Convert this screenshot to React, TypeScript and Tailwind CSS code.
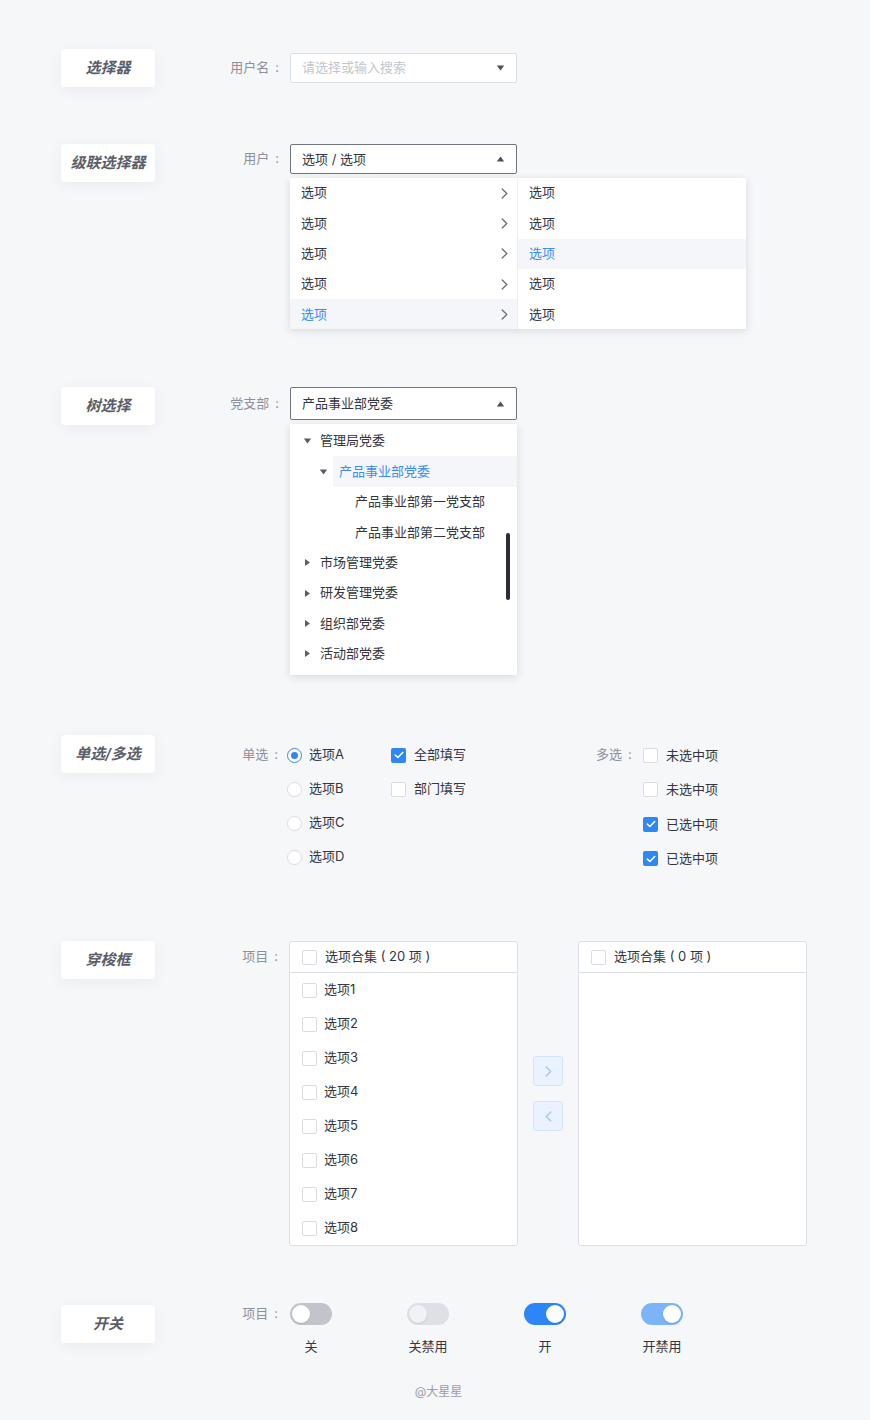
import React from "react";

const TriDown = ({ className = "" }: { className?: string }) => (
  <svg width="9" height="6" viewBox="0 0 9 6" className={className}>
    <path d="M0.8 0.6 L8.2 0.6 L4.5 5.4 Z" fill="currentColor" />
  </svg>
);

const TriUp = ({ className = "" }: { className?: string }) => (
  <svg width="9" height="6" viewBox="0 0 9 6" className={className}>
    <path d="M0.8 5.4 L8.2 5.4 L4.5 0.6 Z" fill="currentColor" />
  </svg>
);

const TriRight = ({ className = "" }: { className?: string }) => (
  <svg width="9" height="9" viewBox="0 0 9 9" className={className}>
    <path d="M2 1 L7 4.5 L2 8 Z" fill="currentColor" />
  </svg>
);

const Chevron = ({ dir = "right", className = "" }: { dir?: "right" | "left"; className?: string }) => (
  <svg width="7" height="11" viewBox="0 0 7 11" className={className}>
    <path
      d={dir === "right" ? "M1.2 1 L5.8 5.5 L1.2 10" : "M5.8 1 L1.2 5.5 L5.8 10"}
      fill="none"
      stroke="currentColor"
      strokeWidth="1.3"
      strokeLinecap="round"
      strokeLinejoin="round"
    />
  </svg>
);

function TitleCard({ children, className = "" }: { children: React.ReactNode; className?: string }) {
  return (
    <div
      className={`ml-[61px] w-[94px] h-[38px] shrink-0 bg-white rounded-[4px] shadow-[0_3px_14px_rgba(40,50,90,0.06)] flex items-center justify-center text-[15px] font-semibold italic text-[#5b5e69] ${className}`}
    >
      {children}
    </div>
  );
}

function FieldLabel({ text, className = "" }: { text: string; className?: string }) {
  return (
    <div className={`shrink-0 flex items-center justify-end text-[13px] text-[#8d909a] ${className}`}>
      <span>{text}</span>
      <span className="ml-[6px]">:</span>
    </div>
  );
}

function Checkbox({ checked }: { checked?: boolean }) {
  return checked ? (
    <span className="w-[15px] h-[15px] rounded-[2px] bg-[#2f86f6] flex items-center justify-center shrink-0">
      <svg width="10" height="8" viewBox="0 0 10 8">
        <path
          d="M1.3 4.1 L3.9 6.5 L8.7 1.5"
          fill="none"
          stroke="white"
          strokeWidth="1.6"
          strokeLinecap="round"
          strokeLinejoin="round"
        />
      </svg>
    </span>
  ) : (
    <span className="w-[15px] h-[15px] rounded-[2px] bg-white border border-[#dadce2] shrink-0" />
  );
}

function Radio({ checked }: { checked?: boolean }) {
  return checked ? (
    <span className="w-[15px] h-[15px] rounded-full border-[1.5px] border-[#2f86f6] bg-white flex items-center justify-center shrink-0">
      <span className="w-[7px] h-[7px] rounded-full bg-[#2f86f6]" />
    </span>
  ) : (
    <span className="w-[15px] h-[15px] rounded-full border border-[#dadce2] bg-white shrink-0" />
  );
}

function Switch({ on, disabled }: { on?: boolean; disabled?: boolean }) {
  const track = on
    ? disabled
      ? "bg-[#7db3f9] justify-end"
      : "bg-[#2c86f7] justify-end"
    : disabled
    ? "bg-[#dfe0e5] justify-start"
    : "bg-[#c2c4cc] justify-start";
  const knob = !on && disabled ? "bg-[#f1f2f5]" : "bg-white";
  return (
    <div className={`w-[42px] h-[22px] rounded-full p-[2px] flex items-center ${track}`}>
      <span className={`w-[18px] h-[18px] rounded-full shadow-[0_1px_2px_rgba(0,0,0,0.1)] ${knob}`} />
    </div>
  );
}

function TransferPanel({ title, items, widthClass }: { title: string; items: string[]; widthClass: string }) {
  return (
    <div className={`${widthClass} bg-white border border-[#dcdfe6] rounded-[3px] flex flex-col`}>
      <div className="h-[31px] border-b border-[#dcdfe6] flex items-center pl-[12px] gap-[8px] text-[13px] text-[#333640]">
        <Checkbox />
        <span>{title}</span>
      </div>
      <div className="h-[272px] flex flex-col">
        {items.map((it) => (
          <div key={it} className="h-[34px] flex items-center pl-[12px] gap-[7px] text-[13px] text-[#333640]">
            <Checkbox />
            <span>{it}</span>
          </div>
        ))}
      </div>
    </div>
  );
}

export default function App() {
  const leftRows = [false, false, false, false, true];
  const rightRows = [false, false, true, false, false];
  return (
    <div className="w-full min-h-[1420px] bg-[#f6f7f9] font-['Inter','Noto_Sans_CJK_SC',sans-serif] text-[#333640]">
      {/* 选择器 */}
      <section className="h-[144px] pt-[49px] flex items-start">
        <TitleCard>选择器</TitleCard>
        <div className="h-[38px] flex items-center">
          <FieldLabel text="用户名" className="w-[135px] pr-[11px]" />
          <div className="w-[227px] h-[30px] border border-[#dcdfe6] rounded-[2px] bg-white flex items-center justify-between pl-[11px] pr-[11px]">
            <span className="text-[13px] text-[#c3c6cd]">请选择或输入搜索</span>
            <TriDown className="text-[#4c505b]" />
          </div>
        </div>
      </section>

      {/* 级联选择器 */}
      <section className="h-[243px] flex items-start">
        <TitleCard>级联选择器</TitleCard>
        <div className="flex flex-col">
          <div className="flex items-center h-[30px]">
            <FieldLabel text="用户" className="w-[135px] pr-[11px]" />
            <div className="w-[227px] h-[30px] border border-[#70747f] rounded-[2px] bg-white flex items-center justify-between pl-[11px] pr-[11px]">
              <span className="text-[13px] text-[#333640] pt-[1px]">选项 / 选项</span>
              <TriUp className="text-[#4c505b]" />
            </div>
          </div>
          <div className="ml-[135px] mt-[4px] w-[456px] bg-white shadow-[0_2px_8px_rgba(30,40,70,0.14)] flex">
            <div className="w-[228px] border-r border-[#eceef2] flex flex-col">
              {leftRows.map((hl, i) => (
                <div
                  key={i}
                  className={`h-[30.3px] flex items-center justify-between pl-[11px] pr-[9px] text-[13px] ${
                    hl ? "bg-[#f5f6f9] text-[#3b8cf5]" : "text-[#333640]"
                  }`}
                >
                  <span>选项</span>
                  <Chevron className="text-[#6b6f7a]" />
                </div>
              ))}
            </div>
            <div className="flex-1 flex flex-col">
              {rightRows.map((hl, i) => (
                <div
                  key={i}
                  className={`h-[30.3px] flex items-center pl-[11px] text-[13px] ${
                    hl ? "bg-[#f5f6f9] text-[#3b8cf5]" : "text-[#333640]"
                  }`}
                >
                  选项
                </div>
              ))}
            </div>
          </div>
        </div>
      </section>

      {/* 树选择 */}
      <section className="h-[348px] flex items-start">
        <TitleCard>树选择</TitleCard>
        <div className="flex flex-col">
          <div className="flex items-center h-[33px]">
            <FieldLabel text="党支部" className="w-[135px] pr-[11px]" />
            <div className="w-[227px] h-[33px] border border-[#70747f] rounded-[2px] bg-white flex items-center justify-between pl-[11px] pr-[11px]">
              <span className="text-[13px] text-[#333640]">产品事业部党委</span>
              <TriUp className="text-[#4c505b]" />
            </div>
          </div>
          <div className="relative ml-[135px] mt-[4px] w-[227px] bg-white shadow-[0_2px_8px_rgba(30,40,70,0.14)] pt-[2px] pb-[6px] flex flex-col text-[13px] text-[#333640]">
            <div className="h-[30.4px] flex items-center pl-[13px]">
              <TriDown className="text-[#5a5e6a]" />
              <span className="ml-[8px]">管理局党委</span>
            </div>
            <div className="h-[30.4px] flex items-center pl-[29px]">
              <TriDown className="text-[#5a5e6a]" />
              <div className="ml-[5px] flex-1 h-full flex items-center pl-[6px] bg-[#f5f6f9] text-[#3b8cf5]">
                产品事业部党委
              </div>
            </div>
            <div className="h-[30.4px] flex items-center pl-[65px]">产品事业部第一党支部</div>
            <div className="h-[30.4px] flex items-center pl-[65px]">产品事业部第二党支部</div>
            {["市场管理党委", "研发管理党委", "组织部党委", "活动部党委"].map((t) => (
              <div key={t} className="h-[30.4px] flex items-center pl-[13px]">
                <TriRight className="text-[#5a5e6a]" />
                <span className="ml-[8px]">{t}</span>
              </div>
            ))}
            <div className="absolute right-[7px] top-[109px] w-[4px] h-[67px] rounded-full bg-[#2a2c38]" />
          </div>
        </div>
      </section>

      {/* 单选/多选 */}
      <section className="h-[206px] flex items-start">
        <TitleCard>单选/多选</TitleCard>
        <div className="mt-[3px] flex items-start text-[13px] text-[#333640]">
          <FieldLabel text="单选" className="w-[132px] pr-[9px] h-[34px]" />
          <div className="w-[104px] flex flex-col">
            {["A", "B", "C", "D"].map((l, i) => (
              <div key={l} className="h-[34px] flex items-center gap-[7px]">
                <Radio checked={i === 0} />
                <span>选项{l}</span>
              </div>
            ))}
          </div>
          <div className="w-[205px] flex flex-col">
            <div className="h-[34px] flex items-center gap-[8px]">
              <Checkbox checked />
              <span>全部填写</span>
            </div>
            <div className="h-[34px] flex items-center gap-[8px]">
              <Checkbox />
              <span>部门填写</span>
            </div>
          </div>
          <div className="w-[47px] h-[34px] flex items-center text-[#8d909a]">
            <span>多选</span>
            <span className="ml-[6px]">:</span>
          </div>
          <div className="flex flex-col">
            {[false, false, true, true].map((c, i) => (
              <div key={i} className="h-[34.5px] flex items-center gap-[8px]">
                <Checkbox checked={c} />
                <span>{c ? "已选中项" : "未选中项"}</span>
              </div>
            ))}
          </div>
        </div>
      </section>

      {/* 穿梭框 */}
      <section className="h-[362px] flex items-start">
        <TitleCard>穿梭框</TitleCard>
        <div className="flex items-stretch">
          <FieldLabel text="项目" className="w-[134px] pr-[11px] h-[32px] self-start" />
          <TransferPanel
            widthClass="w-[229px]"
            title="选项合集 ( 20 项 )"
            items={["选项1", "选项2", "选项3", "选项4", "选项5", "选项6", "选项7", "选项8"]}
          />
          <div className="mx-[15px] flex flex-col justify-center gap-[15px]">
            <div className="w-[30px] h-[30px] rounded-[3px] bg-[#e9f2fe] border border-[#d2e4fb] flex items-center justify-center">
              <Chevron className="text-[#a8c4ec]" />
            </div>
            <div className="w-[30px] h-[30px] rounded-[3px] bg-[#e9f2fe] border border-[#d2e4fb] flex items-center justify-center">
              <Chevron dir="left" className="text-[#a8c4ec]" />
            </div>
          </div>
          <TransferPanel widthClass="w-[229px]" title="选项合集 ( 0 项 )" items={[]} />
        </div>
      </section>

      {/* 开关 */}
      <section className="h-[76px] flex items-start">
        <TitleCard className="mt-[2px]">开关</TitleCard>
        <div className="flex items-start">
          <FieldLabel text="项目" className="w-[135px] pr-[12px] h-[22px]" />
          {[
            { on: false, disabled: false, label: "关" },
            { on: false, disabled: true, label: "关禁用" },
            { on: true, disabled: false, label: "开" },
            { on: true, disabled: true, label: "开禁用" },
          ].map((s) => (
            <div key={s.label} className="w-[117px]">
              <div className="w-[42px] flex flex-col items-center">
                <Switch on={s.on} disabled={s.disabled} />
                <span className="mt-[12px] leading-[18px] text-[13px] text-[#333640] whitespace-nowrap">{s.label}</span>
              </div>
            </div>
          ))}
        </div>
      </section>

      <div className="h-[26px] leading-[26px] text-center pl-[7px] text-[12px] text-[#9a9da6]">@大星星</div>
    </div>
  );
}
